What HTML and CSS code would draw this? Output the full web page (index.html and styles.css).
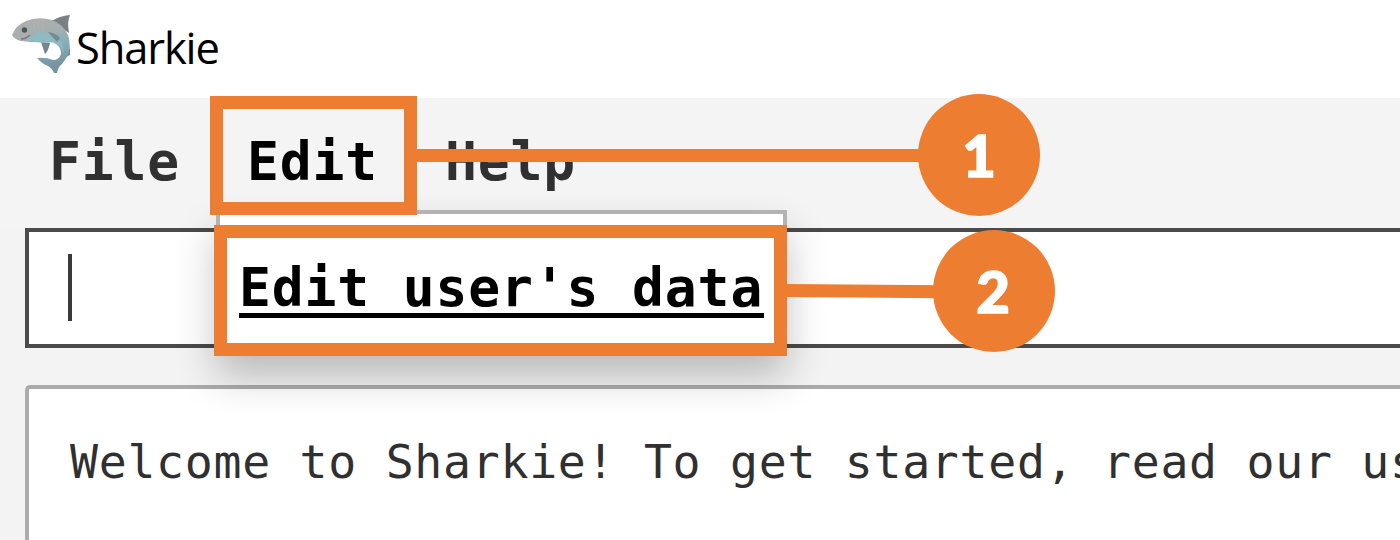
FILE: index.html
```html
<!DOCTYPE html>
<html lang="en">
<head>
<meta charset="utf-8">
<title>Sharkie</title>
<link rel="stylesheet" href="styles.css">
</head>
<body>
<div class="app">
  <header class="titlebar">
    <svg class="logo" viewBox="0 0 60 60" width="60" height="60" aria-hidden="true">
      <defs>
        <linearGradient id="skin" x1="0" y1="0" x2="0.25" y2="1">
          <stop offset="0.1" stop-color="#adafad"/>
          <stop offset="0.38" stop-color="#a5afb0"/>
          <stop offset="0.62" stop-color="#86b0b8"/>
          <stop offset="1" stop-color="#7793a0"/>
        </linearGradient>
      </defs>
      <path d="M40 6 Q47 1 58 0 Q55 6 57 18 L51 14Z" fill="#7b7e82"/>
      <path d="M29 27 L33 39 Q36 37 38 28Z" fill="#75878d"/>
      <path d="M54 29 L58 34 V40 L54 42Z" fill="#718b95"/>
      <path d="M0 20 Q4 10 14 6 Q26 1 40 5 Q51 9 56 20 Q60 33 55 42 L50 49 Q46 52 45 58 L42 58 Q40 53 36 51 Q29 48 25 43 Q34 42 41 45 Q47 45 49 39 Q49 32 44 29 L40 27 Q25 28 9 26 Q2 24 0 20Z" fill="url(#skin)"/>
      <path d="M9 24 Q20 21 25 17 Q37 16 50 28 L52 38 Q49 30 42 27 Q26 29 9 24Z" fill="#8ebac1"/>
      <path d="M36 17 Q44 18 48 23 L45 27Z" fill="#748b91"/>
      <path d="M23 5 Q21 9 23 13 M27 5 Q25 9 27 13 M31 5 Q29 9 31 13" fill="none" stroke="#b5b3ac" stroke-width="1"/>
      <path d="M9 24 Q14 24 18 20" fill="none" stroke="#a0666c" stroke-width="1.5"/>
      <circle cx="12.5" cy="15" r="2.7" fill="#4b565c"/>
    </svg>
    <span class="title">Sharkie</span>
  </header>
  <nav class="menubar">
    <span class="menu">File</span>
    <span class="menu menu-open">Edit</span>
    <span class="menu">Help</span>
    <div class="dropdown"><span class="item">Edit user's data</span></div>
  </nav>
  <main class="content">
    <div class="command"><span class="caret"></span></div>
    <div class="output">Welcome to Sharkie! To get started, read our us</div>
  </main>
  <div class="frame frame-edit"></div>
  <div class="frame frame-item"></div>
  <svg class="lines" width="1400" height="540" aria-hidden="true">
    <path d="M416 155.5H930M786 290.5L945 291.7"/>
  </svg>
  <div class="badge badge-one">1</div>
  <div class="badge badge-two">2</div>
</div>
</body>
</html>
```
FILE: styles.css
```css
* { box-sizing: border-box; }
body { margin: 0; background: #f3f3f3; }
.app {
  position: relative;
  display: flex;
  flex-direction: column;
  width: 1400px;
  height: 540px;
  overflow: hidden;
  font-family: "DejaVu Sans Mono", monospace;
  color: #303030;
}
.titlebar {
  display: flex;
  height: 98px;
  padding: 15px 0 0 12px;
  background: #fff;
}
.title {
  margin-left: 4px;
  font: 43.5px/66px "Open Sans", sans-serif;
  letter-spacing: -1.15px;
  color: #000;
}
.menubar {
  position: relative;
  display: flex;
  gap: 67px;
  height: 130px;
  padding: 32px 0 0 49px;
  background: #f4f4f4;
}
.menu {
  width: 131px;
  font-size: 53px;
  font-weight: bold;
  line-height: 64px;
  letter-spacing: 0.85px;
}
.menu-open { color: #000; }
.dropdown {
  position: absolute;
  z-index: 1;
  top: 112px;
  left: 216px;
  width: 571px;
  height: 144px;
  padding: 42px 0 0 19px;
  border: 4px solid #b3b3b3;
  background: #fff;
  box-shadow: 0 22px 38px rgba(0, 0, 0, 0.24);
}
.item {
  display: block;
  width: 525px;
  height: 62px;
  border-bottom: 5px solid #000;
  color: #000;
  font-size: 53px;
  font-weight: bold;
  line-height: 64px;
  letter-spacing: 0.85px;
  white-space: nowrap;
}
.content {
  display: flex;
  flex: 1;
  flex-direction: column;
  gap: 37px;
  padding-left: 25px;
}
.command {
  height: 120px;
  padding: 22px 0 0 39px;
  border: 4px solid #4a4a4a;
  border-right: 0;
  background: #fff;
}
.caret {
  display: block;
  width: 4px;
  height: 67px;
  background: #3a3a3a;
}
.output {
  flex: 1;
  padding: 43px 0 0 41px;
  border: 4px solid #ababab;
  border-width: 4px 0 0 4px;
  border-radius: 5px 0 0;
  background: #fff;
  font-size: 46.5px;
  line-height: 60px;
  letter-spacing: 0.7px;
  white-space: nowrap;
}
.frame {
  position: absolute;
  z-index: 2;
  border: 13px solid #ed7d31;
}
.frame-edit { top: 96px; left: 210px; width: 207px; height: 119px; }
.frame-item { top: 225px; left: 214px; width: 573px; height: 131px; }
.lines {
  position: absolute;
  z-index: 3;
  inset: 0;
  fill: none;
  stroke: #ed7d31;
  stroke-width: 13px;
}
.badge {
  position: absolute;
  z-index: 4;
  width: 122px;
  height: 122px;
  border-radius: 50%;
  background: #ed7d31;
  color: #fff;
  font: 900 58px/121px Lato, sans-serif;
  -webkit-text-stroke: 1.6px #fff;
  text-align: center;
}
.badge-one { top: 94px; left: 918px; }
.badge-two { top: 230px; left: 933px; padding-right: 2px; }
```
